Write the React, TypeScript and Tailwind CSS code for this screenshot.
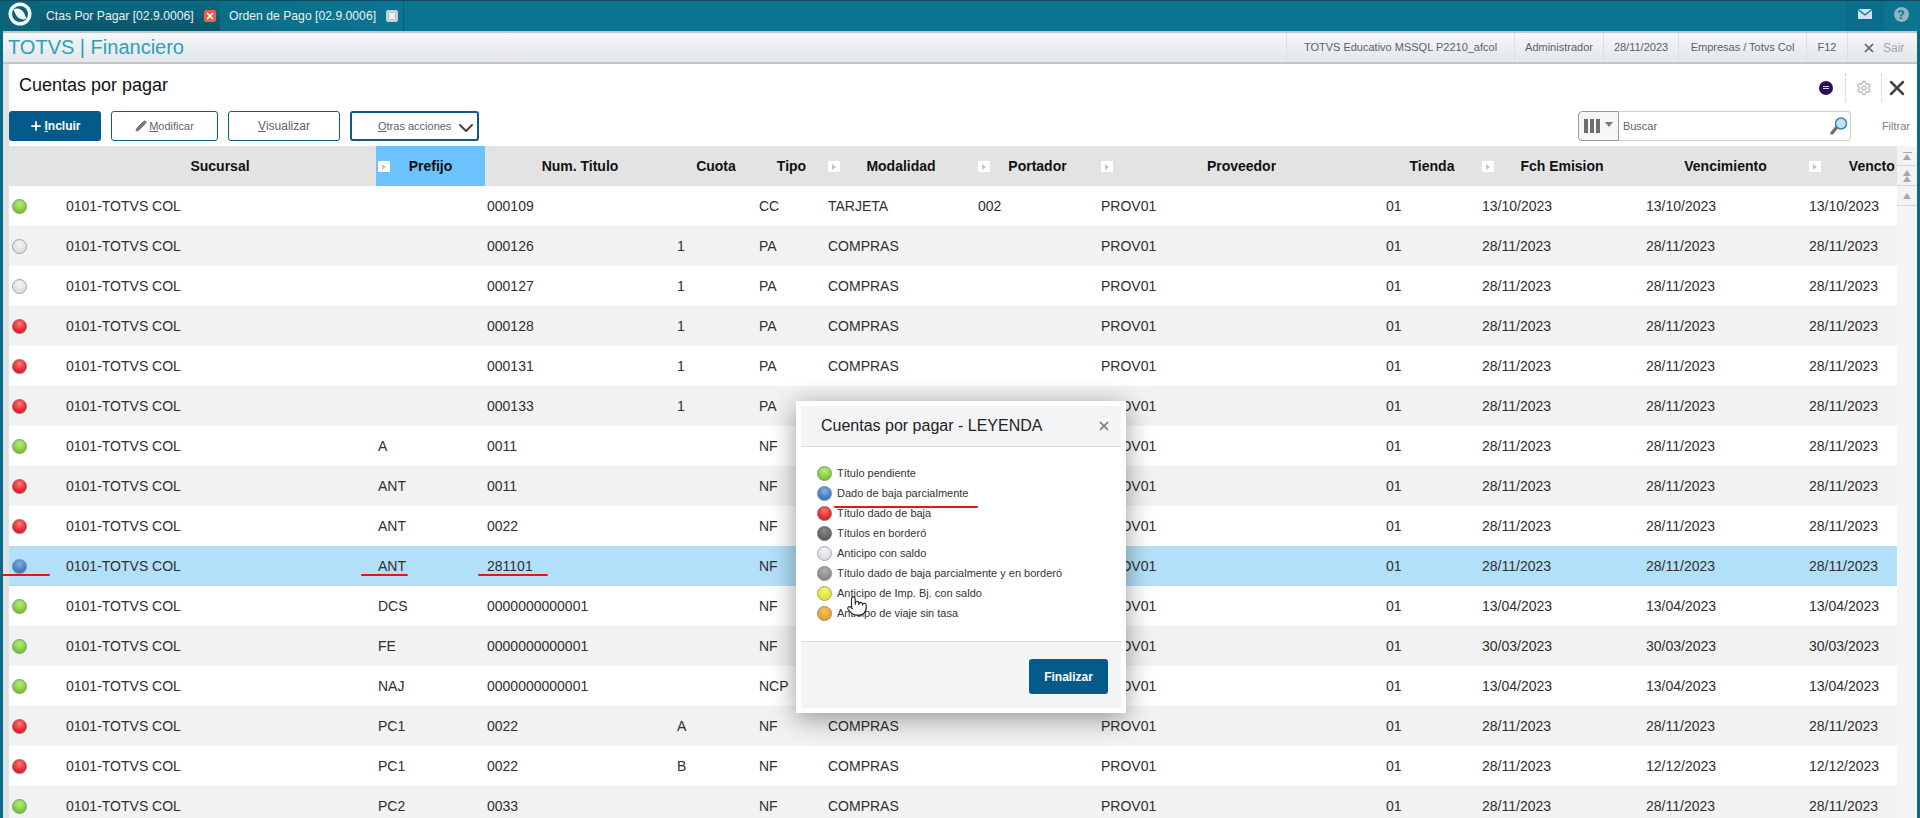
import { ChevronDown, Pencil, Plus, Pointer, Settings, X } from "lucide-react";

type Row = {
  status: string;
  prefijo: string;
  num: string;
  cuota: string;
  tipo: string;
  modalidad: string;
  portador: string;
  emision: string;
  vencimiento: string;
  real: string;
};

const d = "28/11/2023";

const rows: Row[] = [
  { status: "green", prefijo: "", num: "000109", cuota: "", tipo: "CC", modalidad: "TARJETA", portador: "002", emision: "13/10/2023", vencimiento: "13/10/2023", real: "13/10/2023" },
  { status: "white", prefijo: "", num: "000126", cuota: "1", tipo: "PA", modalidad: "COMPRAS", portador: "", emision: d, vencimiento: d, real: d },
  { status: "white", prefijo: "", num: "000127", cuota: "1", tipo: "PA", modalidad: "COMPRAS", portador: "", emision: d, vencimiento: d, real: d },
  { status: "red", prefijo: "", num: "000128", cuota: "1", tipo: "PA", modalidad: "COMPRAS", portador: "", emision: d, vencimiento: d, real: d },
  { status: "red", prefijo: "", num: "000131", cuota: "1", tipo: "PA", modalidad: "COMPRAS", portador: "", emision: d, vencimiento: d, real: d },
  { status: "red", prefijo: "", num: "000133", cuota: "1", tipo: "PA", modalidad: "", portador: "", emision: d, vencimiento: d, real: d },
  { status: "green", prefijo: "A", num: "0011", cuota: "", tipo: "NF", modalidad: "", portador: "", emision: d, vencimiento: d, real: d },
  { status: "red", prefijo: "ANT", num: "0011", cuota: "", tipo: "NF", modalidad: "", portador: "", emision: d, vencimiento: d, real: d },
  { status: "red", prefijo: "ANT", num: "0022", cuota: "", tipo: "NF", modalidad: "", portador: "", emision: d, vencimiento: d, real: d },
  { status: "blue", prefijo: "ANT", num: "281101", cuota: "", tipo: "NF", modalidad: "", portador: "", emision: d, vencimiento: d, real: d },
  { status: "green", prefijo: "DCS", num: "0000000000001", cuota: "", tipo: "NF", modalidad: "", portador: "", emision: "13/04/2023", vencimiento: "13/04/2023", real: "13/04/2023" },
  { status: "green", prefijo: "FE", num: "0000000000001", cuota: "", tipo: "NF", modalidad: "", portador: "", emision: "30/03/2023", vencimiento: "30/03/2023", real: "30/03/2023" },
  { status: "green", prefijo: "NAJ", num: "0000000000001", cuota: "", tipo: "NCP", modalidad: "", portador: "", emision: "13/04/2023", vencimiento: "13/04/2023", real: "13/04/2023" },
  { status: "red", prefijo: "PC1", num: "0022", cuota: "A", tipo: "NF", modalidad: "COMPRAS", portador: "", emision: d, vencimiento: d, real: d },
  { status: "red", prefijo: "PC1", num: "0022", cuota: "B", tipo: "NF", modalidad: "COMPRAS", portador: "", emision: d, vencimiento: "12/12/2023", real: "12/12/2023" },
  { status: "green", prefijo: "PC2", num: "0033", cuota: "", tipo: "NF", modalidad: "COMPRAS", portador: "", emision: d, vencimiento: d, real: d },
];

const dotColors: Record<string, string> = {
  green: "bg-[radial-gradient(circle_at_50%_30%,#b5ec7c,#7fce3f_60%,#6aa83a)] border-[#7f9f68]",
  white: "bg-[radial-gradient(circle_at_50%_30%,#f4f4f4,#dedede_70%)] border-[#a3a3a3]",
  red: "bg-[radial-gradient(circle_at_50%_30%,#ff7a7a,#e8262e_60%,#c02a30)] border-[#a0605c]",
  blue: "bg-[radial-gradient(circle_at_50%_30%,#86aee0,#437fc6_60%,#3a6ea8)] border-[#6c8cae]",
  dark: "bg-[radial-gradient(circle_at_50%_30%,#8a8a8a,#5f5f5f_70%)] border-[#6b6b6b]",
  pale: "bg-[radial-gradient(circle_at_50%_30%,#f2f2f6,#dcdce4_70%)] border-[#a8a8a8]",
  gray: "bg-[radial-gradient(circle_at_50%_30%,#b0b0b0,#8a8a8a_70%)] border-[#8a8a8a]",
  yellow: "bg-[radial-gradient(circle_at_50%_30%,#f2f47a,#dfe03a_70%)] border-[#a8a85c]",
  orange: "bg-[radial-gradient(circle_at_50%_30%,#f5c060,#e8a030_70%)] border-[#b08a50]",
};

const legend = [
  { color: "green", label: "Título pendiente" },
  { color: "blue", label: "Dado de baja parcialmente" },
  { color: "red", label: "Título dado de baja" },
  { color: "dark", label: "Títulos en borderó" },
  { color: "pale", label: "Anticipo con saldo" },
  { color: "gray", label: "Título dado de baja parcialmente y en borderó" },
  { color: "yellow", label: "Anticipo de Imp. Bj. con saldo" },
  { color: "orange", label: "Anticipo de viaje sin tasa" },
];

const infoItems = [
  { label: "TOTVS Educativo MSSQL P2210_afcol", width: "w-[228px]" },
  { label: "Administrador", width: "w-[89px]" },
  { label: "28/11/2023", width: "w-[75px]" },
  { label: "Empresas / Totvs Col", width: "w-[128px]" },
  { label: "F12", width: "w-[41px]" },
];

const gridCols =
  "grid grid-cols-[55px_312px_109px_190px_82px_69px_150px_123px_285px_96px_164px_163px_163px]";

function Dot({ color }: { color: string }) {
  return <span className={`block h-[15px] w-[15px] shrink-0 rounded-full border ${dotColors[color]}`} />;
}

function SortTag() {
  return (
    <span className="absolute left-[2px] top-[15px] flex h-[11px] w-[12px] items-center justify-center bg-white">
      <span className="h-0 w-0 border-y-[3px] border-l-[4px] border-y-transparent border-l-[#c4c4c4]" />
    </span>
  );
}

function Header({ label, tag, active }: { label: string; tag?: boolean; active?: boolean }) {
  return (
    <div className={`relative flex items-center justify-center whitespace-nowrap ${active ? "bg-[#6bc2fc]" : ""}`}>
      {tag && <SortTag />}
      {label}
    </div>
  );
}

function ScrollBtn({ bars }: { bars: "top" | "double" | "single" }) {
  return (
    <div className="flex h-[20px] w-full flex-col items-center justify-center border-b border-[#d4d4d4] bg-[#f3f3f3]">
      {bars === "top" && <span className="mb-[1px] h-px w-[9px] bg-[#a8a8a8]" />}
      <span className="h-0 w-0 border-x-[4px] border-b-[6px] border-x-transparent border-b-[#a8a8a8]" />
      {bars === "double" && (
        <span className="h-0 w-0 border-x-[4px] border-b-[6px] border-x-transparent border-b-[#a8a8a8]" />
      )}
    </div>
  );
}

function Btn({ width, children, className }: { width: string; children: React.ReactNode; className?: string }) {
  return (
    <button
      className={`flex h-[30px] items-center justify-center rounded-[3px] border border-[#0c5c86] bg-white text-[#5d6368] ${width} ${className ?? ""}`}
    >
      {children}
    </button>
  );
}

export default function App() {
  return (
    <div className="relative flex h-[818px] w-[1920px] flex-col overflow-hidden bg-white font-['Liberation_Sans',Arial,sans-serif] text-[#222]">
      {/* tab bar */}
      <div className="flex h-[31px] shrink-0 items-stretch border-t border-[#0f4a5e] bg-gradient-to-r from-[#0a6478] to-[#0b7491] to-[20%]">
        <div className="flex w-[40px] items-center justify-center">
          <svg width="24" height="24" viewBox="0 0 24 24" className="-mt-[5px]">
            <circle cx="12" cy="12" r="11.500" fill="#f4f6f7" />
            <circle cx="12" cy="12" r="8" fill="#0a6478" />
            <path d="M5.500 7.500C9 5.500 14 7 16 11c1 2 2 4.500 2.500 5.500C15 18.500 10 17 8 13 7 11 6 8.500 5.500 7.500Z" fill="#f4f6f7" />
          </svg>
        </div>
        <div className="flex w-[180px] items-center bg-gradient-to-b from-[#0a6c86] to-[#0a5468] pl-[6px] text-[12.200px] text-[#e8f2f5]">
          <span className="w-[158px] whitespace-nowrap">Ctas Por Pagar [02.9.0006]</span>
          <span className="flex h-[12px] w-[12px] items-center justify-center rounded-[2px] bg-[#e8604c]">
            <X size={10} strokeWidth={4} className="text-white" />
          </span>
        </div>
        <div className="flex w-[184px] items-center border-r border-[#0a5f78] pl-[9px] text-[12.200px] text-[#e8f2f5]">
          <span className="w-[157px] whitespace-nowrap">Orden de Pago [02.9.0006]</span>
          <span className="flex h-[12px] w-[12px] items-center justify-center rounded-[2px] bg-[#c3ced3]">
            <X size={10} strokeWidth={4} className="text-white" />
          </span>
        </div>
        <div className="flex-1" />
        <div className="flex w-[38px] items-center justify-center border-x border-[#0a6a84] bg-[#0a6e8a] pb-[4px]">
          <svg width="14" height="10" viewBox="0 0 14 10">
            <rect width="14" height="10" rx="0.500" fill="#cfe4ea" />
            <path d="M0 .5 7 6l7-5.500" fill="none" stroke="#0a6e8a" strokeWidth="1.300" />
          </svg>
        </div>
        <div className="flex w-[36px] items-center justify-center pb-[3px] pr-[2px]">
          <span className="flex h-[15px] w-[15px] items-center justify-center rounded-full bg-[#8fb4c2] text-[12px] font-bold text-[#0b7491]">?</span>
        </div>
      </div>

      <div className="flex min-h-0 flex-1 flex-col border-x-[3px] border-x-[#0b6a85]">
        {/* module bar */}
        <div className="flex h-[33px] shrink-0 items-center justify-between border-y-2 border-[#c3c6c8] bg-gradient-to-b from-[#f4f6f7] to-[#e4e7e9]">
          <span className="pb-[2px] pl-[5px] text-[20px] leading-none text-[#2ba1ba]">TOTVS | Financiero</span>
          <div className="flex h-full items-center text-[11px] text-[#5b6166]">
            {infoItems.map((item) => (
              <span
                key={item.label}
                className={`flex h-full items-center justify-center whitespace-nowrap border-l border-[#dcdfe1] ${item.width}`}
              >
                {item.label}
              </span>
            ))}
            <span className="flex h-full w-[70px] items-center gap-[7px] border-l border-[#dcdfe1] pl-[14px] text-[12px] text-[#a2a6aa]">
              <X size={14} strokeWidth={3} className="text-[#5f6468]" />
              Sair
            </span>
          </div>
        </div>

        {/* page */}
        <div className="flex min-h-0 flex-1 flex-col border-l-[6px] border-l-[#dfe3e5]">
          <div className="flex h-[47px] shrink-0 items-center justify-between">
            <h1 className="pb-[5px] pl-[10px] text-[18px] text-[#111]">Cuentas por pagar</h1>
            <div className="flex items-center">
              <span className="flex h-[14px] w-[14px] items-center justify-center rounded-full bg-[#2b0f55]">
                <span className="h-[3px] w-[6px] border-y border-[#e8c8ff]" />
              </span>
              <span className="ml-[12px] h-[28px] border-l border-dotted border-[#c8c8c8]" />
              <span className="flex w-[35px] justify-center">
                <Settings size={16} strokeWidth={2.500} className="text-[#c8c8c8]" />
              </span>
              <span className="h-[28px] border-l border-dotted border-[#c8c8c8]" />
              <span className="flex w-[35px] justify-center pr-[6px]">
                <X size={24} strokeWidth={2.500} className="text-[#444]" />
              </span>
            </div>
          </div>

          {/* toolbar */}
          <div className="flex h-[35px] shrink-0 items-start justify-between pl-0 pr-[7px]">
            <div className="flex gap-[10px]">
              <button className="flex h-[30px] w-[92px] items-center justify-center gap-[1px] rounded-[3px] bg-[#055a8c] text-[12px] font-bold text-white">
                <Plus size={14} strokeWidth={3} />
                <span><u>I</u>ncluir</span>
              </button>
              <Btn width="w-[107px]" className="text-[11px]">
                <Pencil size={12} fill="#7a7a7a" className="mr-[2px] text-[#7a7a7a]" />
                <span><u>M</u>odificar</span>
              </Btn>
              <Btn width="w-[112px]" className="text-[12px]">
                <span><u>V</u>isualizar</span>
              </Btn>
              <Btn width="w-[129px]" className="justify-start gap-[3px] border-2 border-[#0b2d46] pl-[26px] text-[11px]">
                <span className="whitespace-nowrap"><u>O</u>tras acciones</span>
                <ChevronDown size={24} strokeWidth={2} className="mt-[4px] shrink-0 text-[#444]" />
              </Btn>
            </div>
            <div className="flex items-center">
              <div className="flex h-[30px] w-[41px] items-center justify-center gap-[5px] rounded-l-[4px] border border-[#9a9a9a] bg-[#f6f6f6]">
                <span className="flex gap-[2px]">
                  <span className="h-[14px] w-[4px] bg-[#6e6e6e]" />
                  <span className="h-[14px] w-[4px] bg-[#6e6e6e]" />
                  <span className="h-[14px] w-[4px] bg-[#6e6e6e]" />
                </span>
                <span className="mb-[3px] h-0 w-0 border-x-[4px] border-t-[5px] border-x-transparent border-t-[#777]" />
              </div>
              <div className="flex h-[30px] w-[232px] items-center justify-between rounded-r-[4px] border border-l-0 border-[#cfcfcf] pl-[4px] pr-[1px] text-[11px] text-[#666]">
                Buscar
                <svg width="20" height="20" viewBox="0 0 20 20">
                  <line x1="3" y1="17" x2="8" y2="11" stroke="#7b6f5c" strokeWidth="3.500" strokeLinecap="round" />
                  <circle cx="12" cy="7.500" r="5.500" fill="#bfe3f7" stroke="#3d86b5" strokeWidth="1.500" />
                </svg>
              </div>
              <span className="ml-[31px] text-[11px] text-[#7a8288]">Filtrar</span>
            </div>
          </div>

          {/* table */}
          <div className="relative min-h-0 flex-1 overflow-hidden text-[14px]">
            <div className={`${gridCols} h-[40px] bg-[#e3e3e3] text-[14px] font-bold text-[#111]`}>
              <div />
              <Header label="Sucursal" />
              <Header label="Prefijo" tag active />
              <Header label="Num. Titulo" />
              <Header label="Cuota" />
              <Header label="Tipo" />
              <Header label="Modalidad" tag />
              <Header label="Portador" tag />
              <Header label="Proveedor" tag />
              <Header label="Tienda" />
              <Header label="Fch Emision" tag />
              <Header label="Vencimiento" />
              <Header label="Vencto Real" tag />
            </div>
            {rows.map((row, i) => (
              <div
                key={row.num + i}
                className={`${gridCols} h-[40px] items-center whitespace-nowrap text-[#2f2f2f] ${
                  row.status === "blue" ? "bg-[#b3e0f9]" : i % 2 === 1 ? "bg-[#f2f2f2]" : "bg-white"
                }`}
              >
                <div className="pl-[3px]">
                  <Dot color={row.status} />
                </div>
                <div className="pl-[2px]">0101-TOTVS COL</div>
                <div className="pl-[2px]">{row.prefijo}</div>
                <div className="pl-[2px]">{row.num}</div>
                <div className="pl-[2px]">{row.cuota}</div>
                <div className="pl-[2px]">{row.tipo}</div>
                <div className="pl-[2px]">{row.modalidad}</div>
                <div className="pl-[2px]">{row.portador}</div>
                <div className="pl-[2px]">PROV01</div>
                <div className="pl-[2px]">01</div>
                <div className="pl-[2px]">{row.emision}</div>
                <div className="pl-[2px]">{row.vencimiento}</div>
                <div className="pl-[2px]">{row.real}</div>
              </div>
            ))}
            {/* scrollbar */}
            <div className="absolute right-0 top-0 flex h-full w-[20px] flex-col bg-[#f5f5f5]">
              <ScrollBtn bars="top" />
              <ScrollBtn bars="double" />
              <ScrollBtn bars="single" />
            </div>
          </div>
        </div>
      </div>

      {/* red marks */}
      <span className="absolute left-[2px] top-[574px] h-[2px] w-[48px] rounded bg-[#e8141c]" />
      <span className="absolute left-[361px] top-[574px] h-[2px] w-[47px] rounded bg-[#e8141c]" />
      <span className="absolute left-[478px] top-[574px] h-[2px] w-[70px] rounded bg-[#e8141c]" />

      {/* legend modal */}
      <div className="absolute left-[796px] top-[401px] w-[330px] bg-white p-[5px] shadow-[0_5px_25px_rgba(0,0,0,0.4)]">
        <div className="flex h-[41px] items-center justify-between border-b border-[#dcdcdc] bg-[#f3f4f5] pl-[20px] pr-[10px]">
          <span className="text-[16px] text-[#222]">Cuentas por pagar - LEYENDA</span>
          <X size={14} strokeWidth={3} className="text-[#7c7c7c]" />
        </div>
        <div className="flex h-[194px] flex-col pl-[16px] pt-[16px]">
          {legend.map((item) => (
            <div key={item.label} className="flex h-[20px] items-center gap-[5px] text-[11px] text-[#333]">
              <Dot color={item.color} />
              {item.label}
            </div>
          ))}
        </div>
        <div className="flex h-[67px] items-start justify-end border-t border-[#dcdcdc] bg-[#f3f4f5] pr-[13px] pt-[17px]">
          <button className="h-[35px] w-[79px] rounded-[3px] bg-[#055a8c] text-[12px] font-bold text-white">Finalizar</button>
        </div>
        <span className="absolute left-[38px] top-[105px] h-[2px] w-[144px] rounded bg-[#e8141c]" />
        <Pointer size={22} strokeWidth={1.200} className="absolute left-[50px] top-[194px] text-[#222]" fill="#ffffff" />
      </div>
    </div>
  );
}
